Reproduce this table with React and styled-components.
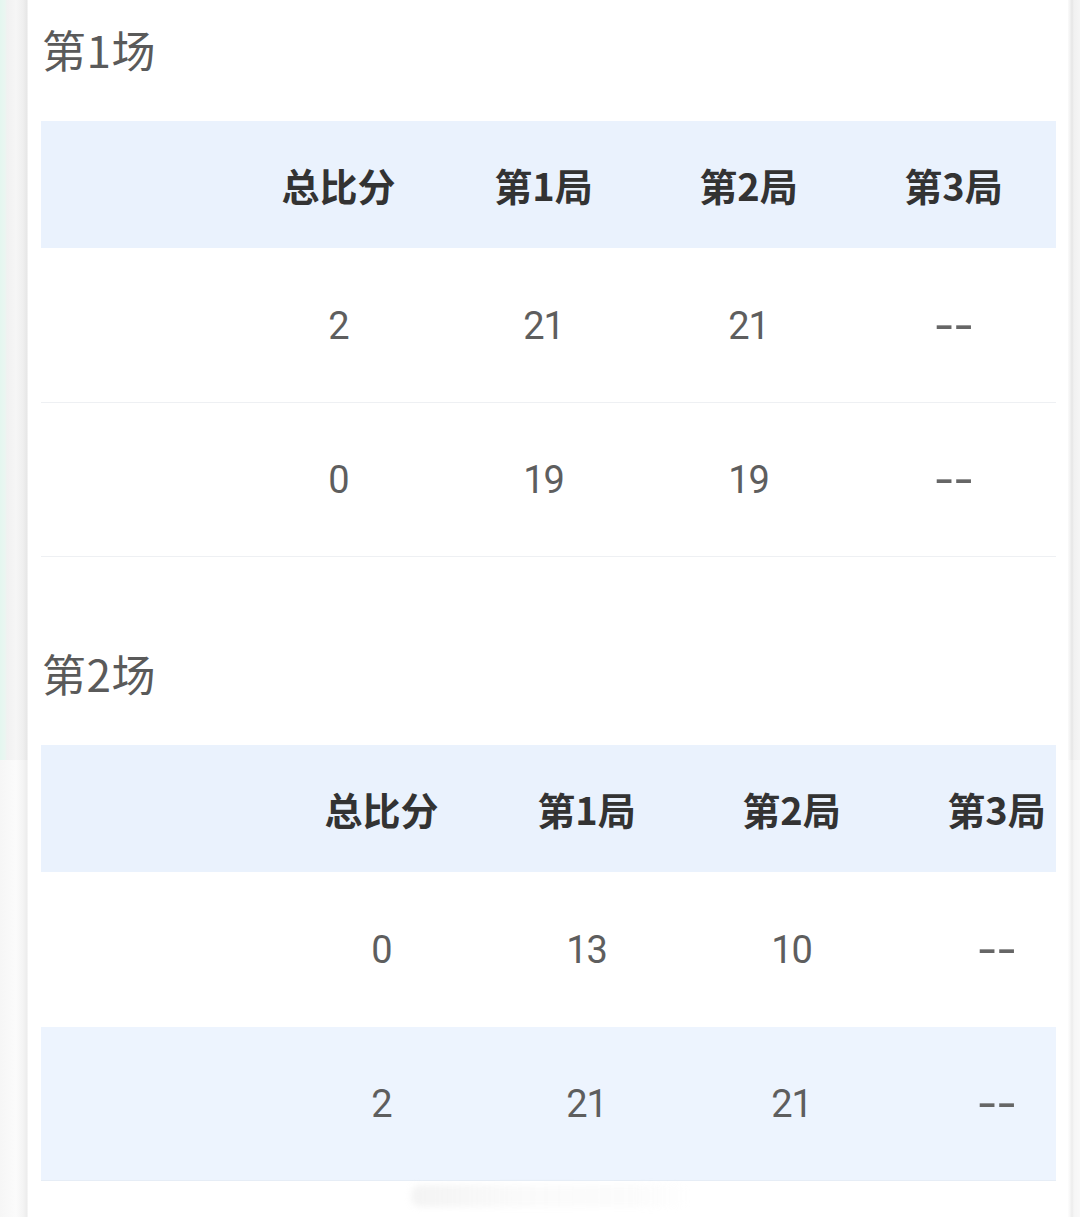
import React from 'react';
import styled, {createGlobalStyle} from 'styled-components';

const GlobalStyle = createGlobalStyle`
  html, body {
    margin: 0;
    padding: 0;
    background: #ffffff;
  }
  body {
    font-family: "Noto Sans CJK SC", "Noto Sans", sans-serif;
    height: 1217px;
    overflow: hidden;
  }
`;

const matches = [
    {
        title: '第1场',
        lead: 195,
        rows: [
            {cells: ['2', '21', '21', '--']},
            {cells: ['0', '19', '19', '--']},
        ],
    },
    {
        title: '第2场',
        lead: 238,
        rows: [
            {cells: ['0', '13', '10', '--'], flat: true},
            {cells: ['2', '21', '21', '--'], active: true},
        ],
    },
];

const heads = ['总比分', '第1局', '第2局', '第3局'];

const Page = styled.div`
  display: flex;
  height: 1217px;
`;

const LeftRail = styled.div`
  width: 28px;
  flex: none;
  display: flex;
  flex-direction: column;
`;

const RailPart = styled.div`
  height: ${p => p.h ? p.h + 'px' : 'auto'};
  flex: ${p => p.h ? 'none' : '1'};
  background: ${p => p.light
    ? 'linear-gradient(to right, #f6f6f6 0, #fbfbfb 16px, #f4f4f4 23px, #ececec 27px, #fdfdfd 28px)'
    : 'linear-gradient(to right, #e4f6ef 0, #eaf6f1 5px, #f1f1f1 7px, #f6f6f6 16px, #efefef 23px, #e6e6e6 27px, #fdfdfd 28px)'};
`;

const RightRail = styled.div`
  width: 12px;
  flex: none;
  display: flex;
  flex-direction: column;
`;

const RightPart = styled.div`
  height: ${p => p.h ? p.h + 'px' : 'auto'};
  flex: ${p => p.h ? 'none' : '1'};
  background: ${p => p.light
    ? 'linear-gradient(to right, #fdfdfd 0, #f7f7f7 2px, #ececec 4px, #f6f6f6 6px, #f9f9f9 12px)'
    : 'linear-gradient(to right, #fbfbfb 0, #f2f2f2 2px, #e6e6e6 4px, #f1f1f1 6px, #f5f5f5 12px)'};
`;

const Main = styled.div`
  flex: 1;
  min-width: 0;
  padding: 0 12px 0 13px;
`;

const Section = styled.section`
  margin-top: ${p => p.first ? '0' : '67px'};
`;

const Title = styled.h2`
  margin: 0;
  padding: 25px 0 0 1px;
  height: 121px;
  box-sizing: border-box;
  font-size: 44px;
  line-height: 48px;
  font-weight: 400;
  letter-spacing: 0.5px;
  color: #5a5a5a;
`;

const TableWrap = styled.div`
  overflow: hidden;
  width: 100%;
`;

const Grid = styled.div`
  display: grid;
  grid-template-columns: ${p => p.lead}px repeat(4, 205px);
  min-width: 100%;
`;

const Row = styled.div`
  display: contents;
`;

const HeadCell = styled.div`
  height: 127px;
  background: #eaf2fd;
  display: flex;
  align-items: center;
  justify-content: center;
  font-size: 38px;
  font-weight: 700;
  color: #333333;
  white-space: nowrap;
`;

const Cell = styled.div`
  height: 154.5px;
  box-sizing: border-box;
  display: flex;
  align-items: center;
  justify-content: center;
  padding-top: 2px;
  font-family: Roboto, "Noto Sans", sans-serif;
  font-size: 38px;
  font-weight: 400;
  letter-spacing: -1px;
  color: #5e5e5e;
  background: ${p => p.active ? '#edf4fe' : '#ffffff'};
  border-bottom: 1.5px solid ${p => p.flat ? 'transparent' : (p.active ? '#e6edf6' : '#eef0f3')};
  white-space: nowrap;
`;

const Dash = styled.span`
  display: inline-block;
  color: #666666;
  font-weight: 500;
  letter-spacing: 0;
  transform: scaleX(1.5);
`;

const Mark = styled.div`
  margin: 4px 0 0 370px;
  height: 22px;
  width: 280px;
  background: linear-gradient(to right, rgba(210,210,210,0.25), rgba(225,225,225,0.15) 40%, rgba(235,235,235,0.18) 80%, rgba(255,255,255,0));
  filter: blur(3px);
  border-radius: 10px;
`;

function Match({data, first}) {
    return (
        <Section first={first}>
            <Title>{data.title}</Title>
            <TableWrap>
                <Grid lead={data.lead}>
                    <Row>
                        <HeadCell/>
                        {heads.map(h => <HeadCell key={h}>{h}</HeadCell>)}
                    </Row>
                    {data.rows.map((r, i) => (
                        <Row key={i}>
                            <Cell active={r.active} flat={r.flat}/>
                            {r.cells.map((c, j) => (
                                <Cell key={j} active={r.active} flat={r.flat}>
                                    {c === '--' ? <Dash>{c}</Dash> : c}
                                </Cell>
                            ))}
                        </Row>
                    ))}
                </Grid>
            </TableWrap>
        </Section>
    );
}

export default function App() {
    return (
        <Page>
            <GlobalStyle/>
            <LeftRail>
                <RailPart h={760}/>
                <RailPart light/>
            </LeftRail>
            <Main>
                {matches.map((m, i) => <Match key={m.title} data={m} first={i === 0}/>)}
                <Mark/>
            </Main>
            <RightRail>
                <RightPart h={760}/>
                <RightPart light/>
            </RightRail>
        </Page>
    );
}
